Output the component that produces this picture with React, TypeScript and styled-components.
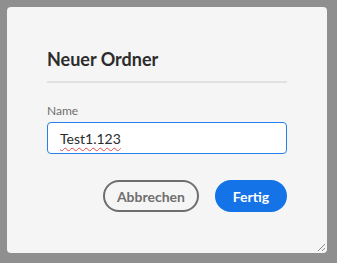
import React from "react";
import styled, { createGlobalStyle } from "styled-components";

const Global = createGlobalStyle`
  html, body { margin: 0; padding: 0; background: #8f8f8f; }
  body { font-family: "Lato", "Noto Sans", sans-serif; }
`;

const Page = styled.div`
  width: 337px;
  height: 263px;
  box-sizing: border-box;
  padding: 7px 10px 10px 7px;
  background: #8f8f8f;
`;

const Dialog = styled.div`
  position: relative;
  width: 320px;
  height: 246px;
  box-sizing: border-box;
  background: #f5f5f5;
  border-radius: 4px;
  padding: 40px 40px 0 40px;
  display: flex;
  flex-direction: column;
`;

const Title = styled.h2`
  margin: 0;
  font-size: 18px;
  font-weight: 700;
  color: #2c2c2c;
  line-height: 24px;
  padding-bottom: 10px;
  border-bottom: 2px solid #e1e1e1;
`;

const Label = styled.label`
  margin-top: 20px;
  font-size: 12px;
  color: #6e6e6e;
  line-height: 16px;
`;

const Input = styled.div`
  margin-top: 3px;
  height: 32px;
  box-sizing: border-box;
  border: 1px solid #2680eb;
  border-radius: 4px;
  background: #ffffff;
  padding: 0 12px;
  display: flex;
  align-items: center;
  font-size: 14px;
  color: #2c2c2c;
`;

const Squiggle = styled.span`
  text-decoration: underline wavy #e34850;
  text-decoration-thickness: 1px;
  text-underline-offset: 3px;
`;

const Actions = styled.div`
  margin-top: 26px;
  display: flex;
  justify-content: flex-end;
  gap: 16px;
`;

const Button = styled.button<{ $primary?: boolean }>`
  height: 32px;
  box-sizing: border-box;
  border-radius: 16px;
  padding: 0 12px;
  font-family: inherit;
  font-size: 14px;
  font-weight: 700;
  border: 2px solid ${(p) => (p.$primary ? "#1473e6" : "#6e6e6e")};
  background: ${(p) => (p.$primary ? "#1473e6" : "transparent")};
  color: ${(p) => (p.$primary ? "#ffffff" : "#6e6e6e")};
  min-width: 72px;
`;

const Grip = styled.svg`
  position: absolute;
  right: 1px;
  bottom: 1px;
`;

export default function App() {
  return (
    <>
      <Global />
      <Page>
        <Dialog>
          <Title>Neuer Ordner</Title>
          <Label>Name</Label>
          <Input>
            <Squiggle>Test1.123</Squiggle>
          </Input>
          <Actions>
            <Button>Abbrechen</Button>
            <Button $primary>Fertig</Button>
          </Actions>
          <Grip width="9" height="9" viewBox="0 0 9 9">
            <path d="M1 8 L8 1 M5 8 L8 5" stroke="#8a8a8a" strokeWidth="1" />
          </Grip>
        </Dialog>
      </Page>
    </>
  );
}
